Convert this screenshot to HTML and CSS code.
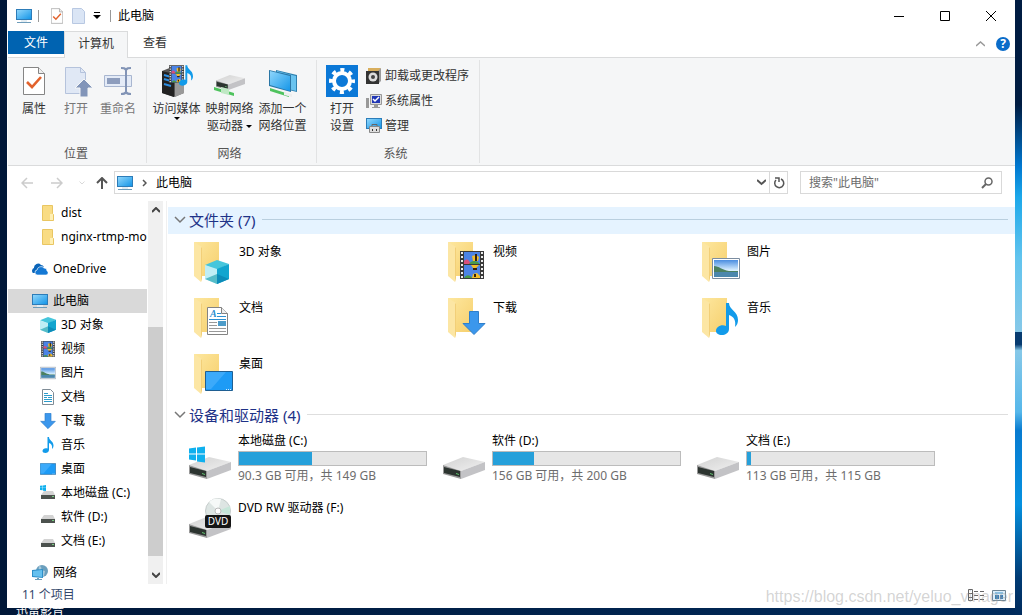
FILE: index.html
```html
<!DOCTYPE html>
<html lang="zh-CN">
<head>
    <meta charset="UTF-8">
    <meta name="viewport" content="width=device-width, initial-scale=1.0">
    <title>此电脑</title>
    <link rel="stylesheet" href="styles.css">
</head>
<body>
    <!-- Shared icons -->
    <svg class="sprite" aria-hidden="true">
        <defs>
            <linearGradient id="g-screen" x1="0" y1="0" x2="1" y2="1">
                <stop offset="0" stop-color="#8fd6fb"/><stop offset="1" stop-color="#1596e8"/>
            </linearGradient>
            <linearGradient id="g-folder" x1="0" y1="0" x2="1" y2="1">
                <stop offset="0" stop-color="#fde79f"/><stop offset="1" stop-color="#f6cf6c"/>
            </linearGradient>
            <linearGradient id="g-drive" x1="0" y1="0" x2="1" y2="1">
                <stop offset="0" stop-color="#d2d2d2"/><stop offset="1" stop-color="#f0f0f0"/>
            </linearGradient>
            <linearGradient id="g-sky" x1="0" y1="0" x2="0" y2="1">
                <stop offset="0" stop-color="#4a8de0"/><stop offset=".6" stop-color="#d9efff"/>
            </linearGradient>
        </defs>
        <symbol id="pc" viewBox="0 0 16 16">
            <path fill="#2d7cb8" d="M0 1h16v11H0z"/>
            <path fill="url(#g-screen)" d="M1 2h14v9H1z"/>
            <path fill="#e3edf3" d="M5 12h6v2H5z"/>
            <path fill="#6d9cba" d="M1 14h14v1H1z"/>
        </symbol>
        <symbol id="props" viewBox="0 0 22 28">
            <path fill="#fff" stroke="#858585" d="M.5.5h15l6 6v21H.5z"/>
            <path fill="#eee" stroke="#858585" d="M15.500.5v6h6"/>
            <path fill="none" stroke="#e2622c" stroke-width="2.600" d="M4 15l5 5 9-10"/>
        </symbol>
        <symbol id="file" viewBox="0 0 16 16">
            <path fill="#dae5f5" stroke="#b8c8e2" d="M1.500.5h9l3 3v12h-12z"/>
        </symbol>
        <symbol id="folder" viewBox="0 0 48 48">
            <path fill="url(#g-folder)" d="M8 4h25v34H15z"/>
            <path fill="#fce6a4" d="M8 4l8 5v31l-1 4-7-6z"/>
            <path fill="#f2cf78" d="M16 9v31l-1 4V10z"/>
        </symbol>
        <symbol id="minifolder" viewBox="0 0 16 16">
            <path fill="#f9dc84" stroke="#e9c662" d="M2.500.5h10v8l1 1v6h-11z"/>
            <path fill="#fff0b5" d="M10 9h3v6h-3z"/>
        </symbol>
        <symbol id="cloud" viewBox="0 0 16 16">
            <path fill="#0a64b8" d="M1 12a3 3 0 0 1 1-5 4 4 0 0 1 7-3 4 4 0 0 1 3 2c-4-1-6 1-7 3-2 0-2 2-2 3z"/>
            <path fill="#1478d4" stroke="#fff" stroke-width=".6" d="M6 14a2 2 0 0 1-1-5 4 4 0 0 1 7-2 3 3 0 0 1 3 3c2 1 1 4-1 4z"/>
        </symbol>
        <symbol id="cube" viewBox="0 0 24 24">
            <path fill="#46c6dc" d="M0 5l12-5 12 4-12 6z"/>
            <path fill="#bfeef5" d="M0 5l12 4v15L0 19z"/>
            <path fill="#12a5cf" d="M12 9l12-5v15l-12 5z"/>
            <path fill="#55bcc8" d="M0 19l12-5v10z"/>
            <path fill="#0c8cb9" d="M12 14l12 5-12 5z"/>
        </symbol>
        <symbol id="film" viewBox="0 0 24 28">
            <path fill="#3a3a3a" d="M0 0h24v28H0z"/>
            <path stroke="#eee" stroke-width="2" stroke-dasharray="2 2" d="M2 1v27M22 1v27"/>
            <path fill="#4b83e6" d="M4 1h16v12H4zM4 14h16v13H4z"/>
            <path fill="#d84f7c" d="M4 10c3-3 5-1 7 3H4z"/>
            <path fill="#4a9a48" d="M9 13c2-4 8-4 11 0zM4 27c3-4 6-3 8 0z"/>
            <path fill="#f3bd28" d="M12 5l4-1 3 2-1 4h-5zM11 14h8l-3 3h-3zM12 27l1-4 4-1 3 3v2z"/>
            <path fill="#33220e" d="M15 3h2v7h-2zM13 17h4v2h-4zM14 23h2v3h-2z"/>
        </symbol>
        <symbol id="pic" viewBox="0 0 28 21">
            <path fill="#fff" stroke="#7b8da0" d="M.5.5h27v20H.5z"/>
            <path fill="url(#g-sky)" d="M2 2h24v17H2z"/>
            <path fill="#4b8060" d="M2 8c5 0 8 4 15 5h9v2H2z"/>
            <path fill="#4b87ad" d="M2 14h24v5H2z"/>
        </symbol>
        <symbol id="doc" viewBox="0 0 21 28">
            <path fill="#fff" stroke="#838383" d="M.5.5h14l6 6v21H.5z"/>
            <path fill="#eee" stroke="#838383" d="M14.500.5v6h6"/>
            <text class="doc-letter" x="3" y="10">A</text>
            <path stroke="#2c8fd0" d="M10 6.500h4M10 9.500h9M2 12.500h17"/>
            <path stroke="#999" d="M2 15.500h8M2 18.500h8M2 21.500h17M2 24.500h17"/>
            <path fill="#4d9cc9" d="M11 14h8v5h-8z"/>
        </symbol>
        <symbol id="minidoc" viewBox="0 0 16 16">
            <path fill="#fff" stroke="#7f8c96" d="M2.500.5h8l3 3v12h-11z"/>
            <path stroke="#2c9ccc" d="M4 4.500h4M4 6.500h8M4 8.500h3M8 8.500h4M4 10.500h8M4 12.500h8"/>
        </symbol>
        <symbol id="down" viewBox="0 0 24 24">
            <path fill="#3b97ec" stroke="#2f7fcb" d="M7.500.5h9v12h6.500L12 23.500 1 12.500h6.500z"/>
        </symbol>
        <symbol id="note" viewBox="0 0 22 32">
            <path fill="#129bea" d="M10 0h3c0 7 9 8 9 17 0 3-1 5-3 7 1-7-1-10-6-12v14c0 4-4 6-7 6-4 0-6-2-6-4 0-4 5-7 10-5z"/>
        </symbol>
        <symbol id="desk" viewBox="0 0 28 20">
            <path fill="#1d9bf6" stroke="#1f5f92" d="M.5.5h27v19H.5z"/>
            <path fill="#3caafa" d="M1 1h20L6 18H1z"/>
            <path stroke="#d2ecff" stroke-dasharray="1 1" d="M21 18.500h6"/>
        </symbol>
        <symbol id="drive" viewBox="0 0 42 22">
            <path fill="url(#g-drive)" d="M0 8L20 0l22 5-24 9z"/>
            <path fill="#c3c3c6" d="M18 14l24-9v8l-24 9z"/>
            <path fill="#999" d="M0 8l18 6v8L0 17z"/>
            <path fill="#2c3430" d="M1 10l16 4v6L1 16z"/>
            <path fill="#62c370" d="M13 16l3 1v1l-3-1z"/>
        </symbol>
        <symbol id="minidrive" viewBox="0 0 16 16">
            <path fill="#d3d3d3" d="M4 6h9l2 4H1z"/>
            <path fill="#4c524e" d="M1 10h14v4H1z"/>
            <path fill="#76cc80" d="M12 11h2v1h-2z"/>
        </symbol>
        <symbol id="flag" viewBox="0 0 16 16">
            <path fill="#0fb0ee" d="M0 2l7-1v6H0zM8 1l8-1v7H8zM0 8h7v6l-7-1zM8 8h8v8l-8-1z"/>
        </symbol>
        <symbol id="globe" viewBox="0 0 16 16">
            <circle cx="10" cy="6" r="6" fill="#6b9fbd"/>
            <path fill="#a8cadc" d="M7 1c2 0 3 2 2 4l4 1-1 5c-4 0-6-4-5-10z"/>
            <path fill="#2e8fc9" d="M0 5l11-1v9L0 12z"/>
            <path fill="#64c0ef" d="M1 6l9-1v7l-9-1z"/>
            <path fill="#6b9fbd" d="M5 13h2v1h3v1H3v-1h2z"/>
        </symbol>
        <symbol id="caret" viewBox="0 0 6 4">
            <path d="M0 0h6L3 3z"/>
        </symbol>
        <symbol id="chev" viewBox="0 0 12 8">
            <path fill="none" stroke="currentColor" stroke-width="1.500" d="M1 1l5 5 5-5"/>
        </symbol>
    </svg>

    <span class="desktop-label">迅雷影音</span>

    <div class="window">
        <header class="titlebar">
            <svg class="i16"><use href="#pc"/></svg>
            <span class="bar"></span>
            <button class="quick" aria-label="属性"><svg width="12" height="16"><use href="#props"/></svg></button>
            <button class="quick" aria-label="新建文件夹"><svg class="i16"><use href="#file"/></svg></button>
            <button class="quick small" aria-label="自定义快速访问工具栏"><svg width="8" height="8" viewBox="0 0 8 8"><path d="M1 0h6v1H1zM0 3h8L4 7z"/></svg></button>
            <span class="bar"></span>
            <h1>此电脑</h1>
            <div class="win-buttons">
                <button aria-label="最小化"><svg width="10" height="10"><path stroke="#000" d="M0 5.500h10"/></svg></button>
                <button aria-label="最大化"><svg width="10" height="10"><path fill="none" stroke="#000" d="M.5.5h9v9h-9z"/></svg></button>
                <button aria-label="关闭"><svg width="10" height="10"><path stroke="#000" d="M0 0l10 10M10 0L0 10"/></svg></button>
            </div>
        </header>

        <nav class="tabs">
            <button class="tab file-tab">文件</button>
            <button class="tab active">计算机</button>
            <button class="tab">查看</button>
            <div class="tab-tools">
                <button aria-label="最小化功能区"><svg width="9" height="6"><path fill="none" stroke="#999" stroke-width="1.500" d="M0 5l4.500-4L9 5"/></svg></button>
                <button class="help" aria-label="帮助">?</button>
            </div>
        </nav>

        <section class="ribbon">
            <div class="group place">
                <div class="tools">
                    <button class="tool"><svg class="big"><use href="#props" x="5" y="2" width="22" height="28"/></svg>属性</button>
                    <button class="tool" disabled>
                        <svg class="big"><path fill="#e0e8f5" stroke="#b5c3dc" d="M5.500 2.500h15l5 5v21h-20z"/><path fill="none" stroke="#b5c3dc" d="M20.500 2.500v5h5"/><path fill="#8295b9" stroke="#f5f6f7" d="M24 14l9 9h-5v9h-8v-9h-5z"/></svg>打开
                    </button>
                    <button class="tool" disabled>
                        <svg class="big"><path fill="#e4ebf7" stroke="#a8b6d0" d="M2.500 10.500h27v11h-27z"/><path fill="#8d9dbd" d="M5 13h13v6H5z"/><path fill="none" stroke="#8294b6" stroke-width="2" d="M19 3c3 0 4 0 5 2 1-2 2-2 5-2M24 5v22M19 29c3 0 4 0 5-2 1 2 2 2 5 2"/></svg>重命名
                    </button>
                </div>
                <div class="caption">位置</div>
            </div>
            <div class="group net">
                <div class="tools">
                    <button class="tool">
                        <svg class="big">
                            <path fill="#555" d="M1 6l10-4 12 3v23l-10 4L1 28z"/><path fill="#222" d="M1 6l12 3v23L1 28z"/><path fill="#999" d="M14 9l9-3v22l-9 4z"/>
                            <path stroke="#2e8de0" stroke-width="2" d="M3 10l7 2M3 14l7 2M3 19l7 2"/>
                            <use href="#film" x="8" y="0" width="15" height="18"/><use href="#note" x="18" y="0" width="14" height="21"/>
                        </svg>访问媒体<svg class="caret"><use href="#caret"/></svg>
                    </button>
                    <button class="tool">
                        <svg class="big"><use href="#drive" x="2" y="9" width="29" height="17"/><path fill="#4fc35e" d="M0 22l20 6v3L0 25z"/><path fill="#bfe8c4" d="M7 22l8 2v6l-8-2z"/></svg>映射网络<span>驱动器 <svg class="caret"><use href="#caret"/></svg></span>
                    </button>
                    <button class="tool">
                        <svg class="big"><path fill="#2e7fae" d="M9 5l21 5v17L9 22z"/><path fill="#69c3ef" d="M10 6l19 5v15l-19-5z"/><path fill="#2a76a6" d="M2 5l22 5v17L2 21z"/><path fill="url(#g-screen)" d="M3 6l20 5v15L3 20z"/><path fill="#4fc35e" d="M3 23l19 6v3L3 26z"/><path fill="#eee" d="M17 27l8 2v3l-8-2z"/></svg>添加一个<span>网络位置</span>
                    </button>
                </div>
                <div class="caption">网络</div>
            </div>
            <div class="group system">
                <div class="tools">
                    <button class="tool">
                        <svg class="big"><path fill="#0b78d7" d="M0 0h32v32H0z"/><circle cx="16" cy="16" r="8" fill="none" stroke="#fff" stroke-width="4"/><circle cx="16" cy="16" r="11" fill="none" stroke="#fff" stroke-width="4" stroke-dasharray="4 4.640" stroke-dashoffset="2"/></svg>打开<span>设置</span>
                    </button>
                    <div class="side">
                        <button><svg class="i16"><path fill="#d8ae5d" d="M2 0h13l-2 3H2z"/><path fill="#9b9b9b" d="M12 3l3-3v13l-3 3z"/><path fill="#333" d="M0 3h13v13H0z"/><circle cx="7" cy="9" r="4.500" fill="#ddd"/><circle cx="7" cy="9" r="2" fill="#444"/></svg>卸载或更改程序</button>
                        <button><svg class="i16"><path fill="#999" d="M0 5h3v10H0z"/><path fill="#dcdcdc" stroke="#999" d="M4.500 1.500h11v10h-11z"/><path fill="#2238b5" d="M6 3h8v7H6z"/><path fill="none" stroke="#fff" stroke-width="1.500" d="M7 6l2 2 4-4"/><path fill="#999" d="M8 12h4v2h2v1H6v-1h2z"/></svg>系统属性</button>
                        <button><svg class="i16"><path fill="#2b7db9" d="M0 0h16v11H0z"/><path fill="url(#g-screen)" d="M1 1h14v9H1z"/><path fill="#ddd" stroke="#888" d="M3.500 8.500h10v6h-10z"/><path fill="none" stroke="#666" d="M6 8V6.500h5V8"/><path fill="#333" d="M6 11h1v2H6zM10 11h1v2h-1z"/></svg>管理</button>
                    </div>
                </div>
                <div class="caption">系统</div>
            </div>
        </section>

        <div class="address-row">
            <button class="dim" aria-label="后退"><svg width="12" height="12"><path fill="none" stroke="currentColor" stroke-width="1.500" d="M6 1L1 6l5 5M1 6h11"/></svg></button>
            <button class="dim" aria-label="前进"><svg width="12" height="12"><path fill="none" stroke="currentColor" stroke-width="1.500" d="M6 1l5 5-5 5M11 6H0"/></svg></button>
            <button class="dim recent" aria-label="最近浏览的位置"><svg width="6" height="4"><use href="#chev"/></svg></button>
            <button class="up" aria-label="上移"><svg width="12" height="12"><path fill="none" stroke="currentColor" stroke-width="2" d="M1 6l5-5 5 5M6 1v11"/></svg></button>
            <div class="path">
                <svg class="i16"><use href="#pc"/></svg>
                <svg width="5" height="8"><path fill="none" stroke="#555" stroke-width="1.500" d="M1 1l3 3-3 3"/></svg>
                <a href="#">此电脑</a>
                <button class="history" aria-label="以前的位置"><svg width="9" height="7"><path fill="none" stroke="currentColor" stroke-width="2" d="M0 1l4.500 4L9 1"/></svg></button>
                <button class="refresh" aria-label="刷新"><svg width="12" height="12"><path fill="none" stroke="currentColor" stroke-width="1.500" d="M8 2a4.500 4.500 0 1 1-5 1M2 1h4v4"/></svg></button>
            </div>
            <label class="search">
                <input type="text" placeholder='搜索"此电脑"' aria-label="搜索">
                <svg width="12" height="12"><circle cx="7.500" cy="4.500" r="3.500" fill="none" stroke="#666" stroke-width="1.500"/><path stroke="#666" stroke-width="2" d="M5 7l-4 4"/></svg>
            </label>
        </div>

        <div class="main">
            <aside class="sidebar">
                <ul class="tree">
                    <li class="sub"><a href="#"><svg class="i16"><use href="#minifolder"/></svg>dist</a></li>
                    <li class="sub"><a href="#"><svg class="i16"><use href="#minifolder"/></svg>nginx-rtmp-module</a></li>
                    <li class="root"><a href="#"><svg class="i16"><use href="#cloud"/></svg>OneDrive</a></li>
                    <li class="root selected"><a href="#"><svg class="i16"><use href="#pc"/></svg>此电脑</a></li>
                    <li class="sub"><a href="#"><svg class="i16"><use href="#cube"/></svg>3D 对象</a></li>
                    <li class="sub"><a href="#"><svg class="i16"><use href="#film"/></svg>视频</a></li>
                    <li class="sub"><a href="#"><svg class="i16"><use href="#pic"/></svg>图片</a></li>
                    <li class="sub"><a href="#"><svg class="i16"><use href="#minidoc"/></svg>文档</a></li>
                    <li class="sub"><a href="#"><svg class="i16"><use href="#down"/></svg>下载</a></li>
                    <li class="sub"><a href="#"><svg class="i16"><use href="#note"/></svg>音乐</a></li>
                    <li class="sub"><a href="#"><svg class="i16"><use href="#desk"/></svg>桌面</a></li>
                    <li class="sub"><a href="#"><svg class="i16"><use href="#minidrive"/><use href="#flag" width="6" height="6"/></svg>本地磁盘 (C:)</a></li>
                    <li class="sub"><a href="#"><svg class="i16"><use href="#minidrive"/></svg>软件 (D:)</a></li>
                    <li class="sub"><a href="#"><svg class="i16"><use href="#minidrive"/></svg>文档 (E:)</a></li>
                    <li class="root"><a href="#"><svg class="i16"><use href="#globe"/></svg>网络</a></li>
                </ul>
                <div class="scrollbar">
                    <button aria-label="向上滚动"><svg width="8" height="6"><path fill="none" stroke="#444" stroke-width="2" d="M0 5l4-4 4 4"/></svg></button>
                    <div class="track"><div class="thumb"></div></div>
                    <button aria-label="向下滚动"><svg width="8" height="6"><path fill="none" stroke="#444" stroke-width="2" d="M0 1l4 4 4-4"/></svg></button>
                </div>
            </aside>

            <main class="content">
                <h2 class="hover"><svg width="12" height="8"><use href="#chev"/></svg>文件夹 (7)</h2>
                <div class="grid folders">
                    <a class="item" href="#"><svg class="i48"><use href="#folder"/><use href="#cube" x="19" y="22" width="24" height="24"/></svg>3D 对象</a>
                    <a class="item" href="#"><svg class="i48"><use href="#folder"/><use href="#film" x="20" y="13" width="24" height="28"/></svg>视频</a>
                    <a class="item" href="#"><svg class="i48"><use href="#folder"/><use href="#pic" x="18" y="20" width="28" height="21"/></svg>图片</a>
                    <a class="item" href="#"><svg class="i48"><use href="#folder"/><use href="#doc" x="21" y="13" width="21" height="28"/></svg>文档</a>
                    <a class="item" href="#"><svg class="i48"><use href="#folder"/><use href="#down" x="22" y="17" width="24" height="24"/></svg>下载</a>
                    <a class="item" href="#"><svg class="i48"><use href="#folder"/><use href="#note" x="22" y="9" width="22" height="32"/></svg>音乐</a>
                    <a class="item" href="#"><svg class="i48"><use href="#folder"/><use href="#desk" x="19" y="21" width="28" height="20"/></svg>桌面</a>
                </div>

                <h2><svg width="12" height="8"><use href="#chev"/></svg>设备和驱动器 (4)</h2>
                <div class="grid drives">
                    <a class="item" href="#">
                        <svg class="i48"><use href="#drive" x="3" y="24" width="42" height="22"/><use href="#flag" x="3" y="13" width="16" height="17"/></svg>
                        <div class="info">本地磁盘 (C:)<div class="meter"><div class="used" style="width: 39%"></div></div><small>90.3 GB 可用，共 149 GB</small></div>
                    </a>
                    <a class="item" href="#">
                        <svg class="i48"><use href="#drive" x="3" y="24" width="42" height="22"/></svg>
                        <div class="info">软件 (D:)<div class="meter"><div class="used" style="width: 22%"></div></div><small>156 GB 可用，共 200 GB</small></div>
                    </a>
                    <a class="item" href="#">
                        <svg class="i48"><use href="#drive" x="3" y="24" width="42" height="22"/></svg>
                        <div class="info">文档 (E:)<div class="meter"><div class="used" style="width: 2%"></div></div><small>113 GB 可用，共 115 GB</small></div>
                    </a>
                    <a class="item" href="#">
                        <svg class="i48">
                            <use href="#drive" x="3" y="16" width="42" height="22"/>
                            <circle cx="32" cy="11" r="12.500" fill="#dde5e3" stroke="#c5cccb"/><path fill="#f6f9f8" d="M32 11L23 2a13 13 0 0 1 12-3z"/><path fill="#c6e6d9" d="M32 11l12-5v9z"/><circle cx="32" cy="11" r="3" fill="#fff" stroke="#bbb"/>
                            <rect x="19" y="15" width="26" height="13" rx="2" fill="#151515"/><text class="dvd" x="32" y="25">DVD</text>
                        </svg>
                        <div class="info">DVD RW 驱动器 (F:)</div>
                    </a>
                </div>
            </main>
        </div>

        <footer class="status">
            <span>11 个项目</span>
            <div class="views">
                <button aria-label="详细信息"><svg width="16" height="12"><path fill="none" stroke="#666" d="M.5.5h4v11h-4zM.5 4.500h4M.5 8.500h4"/><path stroke="#666" stroke-dasharray="4 2" d="M6 2.500h10M6 6.500h10M6 10.500h10"/></svg></button>
                <button aria-label="大图标"><svg width="14" height="11"><path fill="#dceefa" stroke="#6d8493" d="M.5.5h13v10H.5z"/><path fill="#3b7fb4" d="M3 5h4v4H3zM8 5h3v4H8z"/><path fill="#8bc0e2" d="M3 2h8v2H3z"/></svg></button>
            </div>
        </footer>
        <span class="watermark">https://blog.csdn.net/yeluo_vinager</span>
    </div>
</body>
</html>
```
FILE: styles.css
```css
* {
    box-sizing: border-box;
}

body {
    position: relative;
    display: flex;
    height: 100vh;
    margin: 0;
    padding: 0 7px 7px;
    overflow: hidden;
    background: linear-gradient(90deg, #001738, #002b5c);
    font: 12px/16px "Noto Sans", "Noto Sans CJK SC", sans-serif;
    color: #000;
}

/* light streak of the wallpaper on the right */
body::after {
    content: "";
    position: absolute;
    top: 0;
    right: 0;
    bottom: 0;
    width: 7px;
    background: linear-gradient(#001c42 0 17%, #0078d0 27%, #1ca8ea 32%, #62c4ee 42%, #86c8e8 54%, #073b70 54% 56%, #86c8e8 57%, #56b7ea 67%, #087bd0 70%, #0591e0 82%, #003a73 94%, #002b5c);
}

button {
    display: flex;
    align-items: center;
    justify-content: center;
    margin: 0;
    padding: 0;
    border: 0;
    background: none;
    font: inherit;
    color: inherit;
}

a {
    color: inherit;
    text-decoration: none;
}

svg {
    flex: none;
    display: block;
}

.sprite {
    position: absolute;
    width: 0;
    height: 0;
}

.i16 {
    width: 16px;
    height: 16px;
}

.i48 {
    width: 48px;
    height: 48px;
    overflow: visible;
}

.doc-letter {
    font: italic bold 10px "Liberation Serif", serif;
    fill: #2c8fd0;
}

.dvd {
    font-size: 10px;
    fill: #fff;
    text-anchor: middle;
}

.desktop-label {
    position: absolute;
    left: 16px;
    top: 603px;
    color: #fff;
}

.window {
    position: relative;
    display: flex;
    flex-direction: column;
    flex: 1;
    min-width: 0;
    background: #fff;
    border-left: 1px solid #fff;
}

/* Title bar */
.titlebar {
    display: flex;
    align-items: center;
    height: 31px;
    padding: 0 1px 0 8px;
}

.titlebar h1 {
    margin: 0;
    font-size: 12px;
    font-weight: normal;
}

.bar {
    width: 1px;
    height: 12px;
    margin: 0 7px 0 6px;
    background: #999;
}

.quick {
    width: 22px;
}

.quick.small {
    width: 14px;
}

.win-buttons {
    display: flex;
    margin-left: auto;
}

.win-buttons button {
    width: 46px;
    height: 31px;
}

/* Tabs */
.tabs {
    display: flex;
    height: 27px;
    border-bottom: 1px solid #dadbdc;
}

.tab {
    width: 54px;
    height: 24px;
    color: #333;
}

.file-tab {
    width: 56px;
    height: 23px;
    background: #0063b1;
    color: #fff;
}

.tab.active {
    width: 64px;
    height: 27px;
    padding-bottom: 3px;
    border: 1px solid #dadbdc;
    border-bottom: 0;
    background: #f5f6f7;
}

.tab-tools {
    display: flex;
    align-items: center;
    gap: 11px;
    margin-left: auto;
    padding-right: 5px;
}

.help {
    width: 14px;
    height: 14px;
    border-radius: 50%;
    background: #0a6cc9;
    color: #fff;
    font-weight: bold;
}

/* Ribbon */
.ribbon {
    display: flex;
    height: 108px;
    padding: 2px 0;
    background: #f5f6f7;
    border-bottom: 1px solid #dadbdc;
    color: #333;
}

.group {
    display: flex;
    flex-direction: column;
    justify-content: space-between;
    padding: 5px 5px 1px;
    border-right: 1px solid #e2e3e4;
}

.tools {
    display: flex;
}

.tool {
    flex-direction: column;
    justify-content: flex-start;
    width: 42px;
    line-height: 17px;
    white-space: nowrap;
}

.tool:disabled {
    color: #777;
}

.net .tool {
    width: 53px;
}

.system .tool {
    width: 40px;
}

.net {
    padding-left: 3px;
    padding-right: 7px;
}

.place {
    padding-right: 7px;
}

.system {
    padding-right: 10px;
}

.big {
    width: 32px;
    height: 32px;
    margin-bottom: 3px;
    overflow: visible;
}

.caret {
    display: inline-block;
    width: 6px;
    height: 4px;
    vertical-align: middle;
}

.side {
    display: flex;
    flex-direction: column;
    gap: 7px;
    padding: 2px 0 0 4px;
}

.side button {
    gap: 3px;
    justify-content: flex-start;
    height: 18px;
}

.caption {
    text-align: center;
    color: #555;
}

/* Address bar */
.address-row {
    display: flex;
    align-items: center;
    height: 35px;
    padding: 0 13px 2px 11px;
    color: #555;
}

.address-row .dim {
    width: 15px;
    margin-right: 15px;
    color: #ccc;
}

.address-row .recent {
    width: 6px;
    margin-right: 11px;
}

.address-row .up {
    width: 12px;
    margin-right: 6px;
}

.path {
    display: flex;
    flex: 1;
    align-items: center;
    gap: 9px;
    height: 23px;
    padding-left: 2px;
    border: 1px solid #d9d9d9;
    color: #000;
}

.path button {
    height: 21px;
    color: #555;
}

.path .history {
    margin-left: auto;
}

.path .refresh {
    width: 18px;
    margin-left: -6px;
    border-left: 1px solid #d9d9d9;
}

.search {
    display: flex;
    align-items: center;
    width: 202px;
    height: 23px;
    margin-left: 12px;
    padding: 0 8px;
    border: 1px solid #d9d9d9;
}

.search input {
    flex: 1;
    min-width: 0;
    padding: 0;
    border: 0;
    outline: 0;
    font: inherit;
}

.search input::placeholder {
    color: #6d6d6d;
}

/* Main area */
.main {
    display: flex;
    flex: 1;
    min-height: 0;
}

.sidebar {
    display: flex;
    width: 159px;
    border-right: 1px solid #f0f0f0;
}

.tree {
    flex: 1;
    min-width: 0;
    margin: 0;
    padding: 0;
    overflow: hidden;
    list-style: none;
}

.tree a {
    display: flex;
    align-items: center;
    gap: 5px;
    height: 24px;
    padding-left: 32px;
    white-space: nowrap;
}

.tree .root a {
    padding-left: 24px;
}

.root {
    margin-top: 8px;
}

.selected {
    background: #d9d9d9;
}

.scrollbar {
    display: flex;
    flex-direction: column;
    width: 19px;
    padding: 0 3px 0 1px;
    background: #f0f0f0;
    background-clip: content-box;
}

.scrollbar button {
    height: 18px;
}

.track {
    display: flex;
    flex: 1;
    flex-direction: column;
    justify-content: flex-end;
    padding-bottom: 10px;
}

.thumb {
    height: 68%;
    background: #cdcdcd;
}

.content {
    flex: 1;
    min-width: 0;
    padding: 6px 0 0 1px;
}

.content h2 {
    display: flex;
    align-items: center;
    gap: 3px;
    height: 27px;
    margin: 0;
    padding: 0 7px 2px 6px;
    font-size: 15px;
    font-weight: normal;
    color: #1e3287;
}

.content h2 svg {
    color: #777;
}

.content h2::after {
    content: "";
    flex: 1;
    height: 1px;
    margin-left: 4px;
    background: #dedede;
}

.content h2.hover {
    background: #e5f3ff;
}

.content h2.hover::after {
    background: #b9cfdf;
}

.grid {
    display: grid;
    grid-template-columns: repeat(auto-fill, 254px);
    padding-left: 18px;
}

.item {
    display: flex;
    gap: 5px;
}

.folders {
    grid-auto-rows: 56px;
    padding-top: 4px;
    margin-bottom: -4px;
    line-height: 28px;
}

.drives {
    grid-auto-rows: 67px;
    padding-top: 4px;
}

.drives .item {
    gap: 4px;
}

.info {
    width: 189px;
}

.meter {
    height: 15px;
    margin: 2px 0;
    border: 1px solid #bcbcbc;
    background: #e6e6e6;
}

.used {
    height: 100%;
    background: #26a0da;
}

.info small {
    font-size: 12px;
    color: #6d6d6d;
}

/* Status bar */
.status {
    display: flex;
    align-items: center;
    justify-content: space-between;
    height: 24px;
    padding: 0 9px 2px 14px;
    color: #33476b;
}

.views {
    display: flex;
    gap: 8px;
}

.watermark {
    position: absolute;
    right: 2px;
    bottom: 2px;
    font: 16px/18px "Liberation Sans", sans-serif;
    color: rgba(160, 160, 160, 0.45);
    pointer-events: none;
}
```
